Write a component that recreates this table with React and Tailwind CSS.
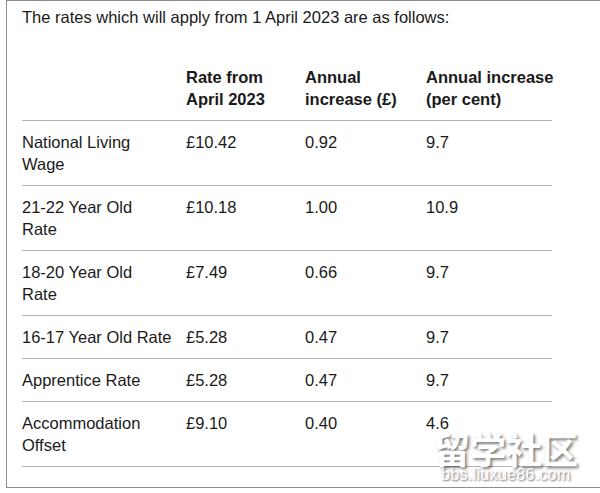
const rows = [
  { label: ["National Living", "Wage"], rate: "£10.42", annual: "0.92", pct: "9.7" },
  { label: ["21-22 Year Old", "Rate"], rate: "£10.18", annual: "1.00", pct: "10.9" },
  { label: ["18-20 Year Old", "Rate"], rate: "£7.49", annual: "0.66", pct: "9.7" },
  { label: ["16-17 Year Old Rate"], rate: "£5.28", annual: "0.47", pct: "9.7" },
  { label: ["Apprentice Rate"], rate: "£5.28", annual: "0.47", pct: "9.7" },
  { label: ["Accommodation", "Offset"], rate: "£9.10", annual: "0.40", pct: "4.6" },
];

export default function App() {
  return (
    <div className="w-[600px] h-[493px] overflow-hidden bg-white pl-[6px] font-['Liberation_Sans',Arial,sans-serif] text-[#1a1a1a]">
      <div className="relative h-[488px] border-t border-b border-l border-[#8e8e8e] pl-[15px] pt-[5px]">
        <p className="text-[16.5px] leading-[22px] mb-[28px]">
          The rates which will apply from 1 April 2023 are as follows:
        </p>
        <table className="w-[530px] border-collapse table-fixed text-[16.5px] leading-[22px]">
          <colgroup>
            <col className="w-[164px]" />
            <col className="w-[119px]" />
            <col className="w-[121px]" />
            <col />
          </colgroup>
          <thead>
            <tr className="border-b border-[#b1b4b6]">
              <th className="text-left align-top font-bold py-[10px]"></th>
              <th className="text-left align-top font-bold py-[10px] whitespace-nowrap">
                Rate from
                <br />
                April 2023
              </th>
              <th className="text-left align-top font-bold py-[10px] whitespace-nowrap">
                Annual
                <br />
                increase (£)
              </th>
              <th className="text-left align-top font-bold py-[10px] whitespace-nowrap">
                Annual increase
                <br />
                (per cent)
              </th>
            </tr>
          </thead>
          <tbody>
            {rows.map((r) => (
              <tr key={r.label.join(" ")} className="border-b border-[#b1b4b6]">
                <td className="align-top py-[10px] whitespace-nowrap">
                  {r.label.map((l, i) => (
                    <div key={i}>{l}</div>
                  ))}
                </td>
                <td className="align-top py-[10px]">{r.rate}</td>
                <td className="align-top py-[10px]">{r.annual}</td>
                <td className="align-top py-[10px]">{r.pct}</td>
              </tr>
            ))}
          </tbody>
        </table>

        {/* watermark */}
        <div className="absolute left-[427px] top-[428px] flex flex-col items-center pointer-events-none select-none">
          <span className="text-[36px] leading-[38px] font-bold text-white font-['Noto_Sans_CJK_SC',sans-serif] [text-shadow:2px_2px_3px_rgba(0,0,0,0.5)]">
            留学社区
          </span>
          <span className="text-[16px] leading-[16px] text-white tracking-[0.3px] [text-shadow:1px_1px_2px_rgba(0,0,0,0.6)]">
            bbs.liuxue86.com
          </span>
        </div>
      </div>
    </div>
  );
}
